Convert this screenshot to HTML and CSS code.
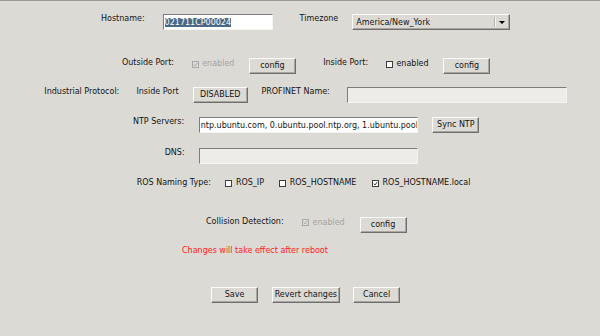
FILE: index.html
```html
<!DOCTYPE html>
<html>
<head>
<meta charset="utf-8">
<link rel="stylesheet" href="styles.css">
</head>
<body>
<div class="panel">
  <div class="row r1">
    <span class="lbl host-lbl">Hostname:</span>
    <div class="entry host-entry"><span class="sel">021711CP00024</span></div>
    <span class="lbl tz-lbl">Timezone</span>
    <div class="combo tz-combo">
      <div class="combo-text">America/New_York</div>
      <div class="combo-arrow"><span class="tri"></span></div>
    </div>
  </div>

  <div class="row r2">
    <span class="lbl out-lbl">Outside Port:</span>
    <span class="check disabled shift out-check"><span class="box"><svg viewBox="0 0 5 5" width="5" height="5"><path d="M0.7 2.6 L2 3.9 L4.3 1" fill="none" stroke="#a3a3a3" stroke-width="0.9"/></svg></span>enabled</span>
    <span class="btn out-cfg">config</span>
    <span class="lbl in-lbl">Inside Port:</span>
    <span class="check shift in-check"><span class="box"></span>enabled</span>
    <span class="btn in-cfg">config</span>
  </div>

  <div class="row r3">
    <span class="lbl ind-lbl">Industrial Protocol:</span>
    <span class="lbl inport-lbl">Inside Port</span>
    <span class="btn dis-btn">DISABLED</span>
    <span class="lbl pn-lbl">PROFINET Name:</span>
    <div class="entry ro pn-entry"></div>
  </div>

  <div class="row r4">
    <span class="lbl ntp-lbl">NTP Servers:</span>
    <div class="entry ntp-entry">ntp.ubuntu.com, 0.ubuntu.pool.ntp.org, 1.ubuntu.pool</div>
    <span class="btn sync-btn">Sync NTP</span>
  </div>

  <div class="row r5">
    <span class="lbl dns-lbl">DNS:</span>
    <div class="entry ro dns-entry"></div>
  </div>

  <div class="row r6">
    <span class="lbl ros-lbl">ROS Naming Type:</span>
    <span class="check ros-check1"><span class="box"></span>ROS_IP</span>
    <span class="check ros-check2"><span class="box"></span>ROS_HOSTNAME</span>
    <span class="check ros-check3"><span class="box"><svg viewBox="0 0 5 5" width="5" height="5"><path d="M0.7 2.6 L2 3.9 L4.3 1" fill="none" stroke="#222" stroke-width="0.9"/></svg></span>ROS_HOSTNAME.local</span>
  </div>

  <div class="row r7">
    <span class="lbl col-lbl">Collision Detection:</span>
    <span class="check disabled shift col-check"><span class="box"><svg viewBox="0 0 5 5" width="5" height="5"><path d="M0.7 2.6 L2 3.9 L4.3 1" fill="none" stroke="#a3a3a3" stroke-width="0.9"/></svg></span>enabled</span>
    <span class="btn col-cfg">config</span>
  </div>

  <div class="row r8">
    <span class="notice">Changes will take effect after reboot</span>
  </div>

  <div class="row r9">
    <span class="btn save-btn">Save</span>
    <span class="btn revert-btn">Revert changes</span>
    <span class="btn cancel-btn">Cancel</span>
  </div>
</div>
</body>
</html>
```

FILE: styles.css
```css
* { box-sizing: border-box; }
html, body { margin: 0; padding: 0; }
body { width: 600px; height: 336px; overflow: hidden; background: #dcdad5; }

.panel {
  width: 600px;
  height: 336px;
  background: #dcdad5;
  border-top: 1px solid #9b9994;
  font-family: "DejaVu Sans", sans-serif;
  font-size: 8px;
  line-height: 10px;
  color: #141414;
  display: flex;
  flex-direction: column;
}

.row { display: flex; align-items: flex-start; flex: none; }
.r1 { margin-top: 13px; height: 16px; }
.r2 { margin-top: 28px; height: 16px; }
.r3 { margin-top: 13px; height: 16px; }
.r4 { margin-top: 14px; height: 16px; }
.r5 { margin-top: 15px; height: 16px; }
.r6 { margin-top: 14px; height: 10px; }
.r7 { margin-top: 28.5px; height: 16px; }
.r8 { margin-top: 13.5px; height: 10px; }
.r9 { margin-top: 31px; height: 16px; }

.lbl { white-space: nowrap; flex: none; }

.btn {
  flex: none;
  width: 47px;
  height: 16px;
  display: flex;
  align-items: center;
  justify-content: center;
  background: #dcdad5;
  border: 1px solid;
  border-color: #fbfbfb #6f6f6f #6f6f6f #fbfbfb;
  box-shadow: inset -1px -1px 0 #aaa69f;
  white-space: nowrap;
  color: #141414;
}

.entry {
  flex: none;
  height: 16px;
  padding: 3px 1px 0 1px;
  border: 1px solid;
  border-color: #7d7d7d #f4f4f4 #f4f4f4 #7d7d7d;
  background: #ffffff;
  overflow: hidden;
  white-space: nowrap;
}
.entry.ro { background: #eeece8; }
.sel { background: #4a6984; color: #ffffff; }

.combo {
  flex: none;
  height: 16px;
  display: flex;
  background: #dcdad5;
  border: 1px solid;
  border-color: #fbfbfb #6f6f6f #6f6f6f #fbfbfb;
  box-shadow: inset -1px -1px 0 #aaa69f;
}
.combo-text { flex: 1; padding: 3px 0 0 3px; white-space: nowrap; overflow: hidden; }
.combo-arrow {
  flex: none;
  width: 13px;
  margin: 2px 1px 2px 0;
  border-left: 1px solid #f7f7f7;
  box-shadow: -1px 0 0 #b5b1aa;
  display: flex;
  align-items: center;
  justify-content: center;
}
.tri {
  width: 0; height: 0;
  border-left: 3px solid transparent;
  border-right: 3px solid transparent;
  border-top: 3px solid #000;
}

.check { flex: none; display: flex; align-items: center; white-space: nowrap; height: 10px; }
.box {
  flex: none;
  width: 7px; height: 7px;
  border: 1px solid #3e3e3e;
  background: #ffffff;
  margin-right: 3.5px;
  display: flex;
  align-items: center;
  justify-content: center;
}
.box svg { display: block; }
.check.disabled { color: #a3a3a3; }
.check.disabled .box { border-color: #a8a8a8; background: #dcdad5; }
.check.shift { margin-top: 1px; }

.notice { color: #ff1a1a; margin-left: 182px; white-space: nowrap; }

/* row 1 */
.host-lbl { margin-left: 101px; }
.host-entry { margin-left: 18px; width: 110px; }
.tz-lbl { margin-left: 27px; }
.tz-combo { margin-left: 14px; width: 158px; }

/* row 2 */
.out-lbl { margin-left: 122px; }
.out-check { margin-left: 17.7px; }
.out-cfg { margin-left: 14.5px; }
.in-lbl { margin-left: 27.3px; }
.in-check { margin-left: 17.8px; }
.in-cfg { margin-left: 14.8px; }

/* row 3 */
.ind-lbl { margin-left: 44.3px; }
.inport-lbl { margin-left: 17.1px; }
.dis-btn { margin-left: 14.1px; width: 55px; }
.pn-lbl { margin-left: 13.7px; }
.pn-entry { margin-left: 17.3px; width: 219.6px; }

/* row 4 */
.ntp-lbl { margin-left: 132.9px; }
.ntp-entry { margin-left: 14.5px; width: 219.6px; }
.sync-btn { margin-left: 14px; }

/* row 5 */
.dns-lbl { margin-left: 164.7px; }
.dns-entry { margin-left: 14.1px; width: 219.6px; }

/* row 6 */
.ros-lbl { margin-left: 136.7px; }
.ros-check1 { margin-left: 14.6px; }
.ros-check2 { margin-left: 15.2px; }
.ros-check3 { margin-left: 15.7px; }

/* row 7 */
.col-lbl { margin-left: 206px; }
.col-check { margin-left: 18.4px; }
.col-cfg { margin-left: 14.8px; }

/* row 9 */
.save-btn { margin-left: 211px; }
.revert-btn { margin-left: 13.7px; width: 68.3px; }
.cancel-btn { margin-left: 13.3px; width: 46.7px; }
```
